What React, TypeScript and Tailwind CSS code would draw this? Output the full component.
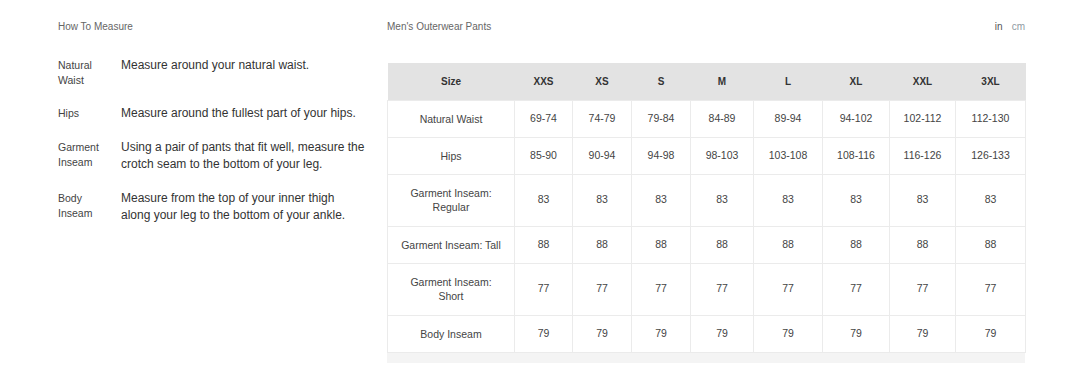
import React from 'react';

const sizes = ['XXS', 'XS', 'S', 'M', 'L', 'XL', 'XXL', '3XL'];
const colWidths = ['w-[127px]', 'w-[58px]', 'w-[59px]', 'w-[59px]', 'w-[63px]', 'w-[69px]', 'w-[67px]', 'w-[66px]', 'w-[70px]'];

const rows: { label: React.ReactNode; values: string[]; tall?: boolean }[] = [
  { label: 'Natural Waist', values: ['69-74', '74-79', '79-84', '84-89', '89-94', '94-102', '102-112', '112-130'] },
  { label: 'Hips', values: ['85-90', '90-94', '94-98', '98-103', '103-108', '108-116', '116-126', '126-133'] },
  { label: <>Garment Inseam:<br />Regular</>, values: Array(8).fill('83'), tall: true },
  { label: 'Garment Inseam: Tall', values: Array(8).fill('88') },
  { label: <>Garment Inseam:<br />Short</>, values: Array(8).fill('77'), tall: true },
  { label: 'Body Inseam', values: Array(8).fill('79') },
];

const guide = [
  { label: <>Natural<br />Waist</>, text: 'Measure around your natural waist.' },
  { label: 'Hips', text: 'Measure around the fullest part of your hips.' },
  { label: <>Garment<br />Inseam</>, text: <>Using a pair of pants that fit well, measure the<br />crotch seam to the bottom of your leg.</> },
  { label: <>Body<br />Inseam</>, text: <>Measure from the top of your inner thigh<br />along your leg to the bottom of your ankle.</> },
];

export default function App() {
  return (
    <div className="w-[1086px] h-[379px] bg-white font-['Liberation_Sans',Arial,sans-serif] flex pl-[58px] pt-[20px]">
      {/* How to measure */}
      <div className="w-[329px] shrink-0">
        <h3 className="text-[10px] leading-[14px] text-[#666]">How To Measure</h3>
        <div className="mt-[23px] flex flex-col gap-[17px]">
          {guide.map((g, i) => (
            <div key={i} className="flex items-start">
              <div className="w-[63px] shrink-0 text-[10.5px] leading-[15px] text-[#444] pt-[1px]">{g.label}</div>
              <div className="text-[12px] leading-[17px] text-[#333]">{g.text}</div>
            </div>
          ))}
        </div>
      </div>

      {/* Size chart */}
      <div className="w-[638px] shrink-0">
        <div className="flex justify-between items-center">
          <h3 className="text-[10px] leading-[14px] text-[#666]">Men's Outerwear Pants</h3>
          <div className="flex gap-[9px] text-[10px] leading-[14px]">
            <span className="text-[#555]">in</span>
            <span className="text-[#8f9aa2]">cm</span>
          </div>
        </div>
        <div className="mt-[29px] border-b-[10px] border-[#f4f4f4]">
          <table className="w-full border-collapse table-fixed text-center">
            <thead>
              <tr className="bg-[#e3e3e3] h-[37px]">
                <th className={`${colWidths[0]} text-[10px] font-bold text-[#333]`}>Size</th>
                {sizes.map((s, i) => (
                  <th key={s} className={`${colWidths[i + 1]} text-[10px] font-bold text-[#333]`}>{s}</th>
                ))}
              </tr>
            </thead>
            <tbody>
              {rows.map((r, ri) => (
                <tr key={ri} className={r.tall ? 'h-[52px]' : 'h-[37px]'}>
                  <td className="border border-[#ebebeb] text-[10.5px] leading-[14px] text-[#444]">{r.label}</td>
                  {r.values.map((v, vi) => (
                    <td key={vi} className="border border-[#ebebeb] text-[10.5px] text-[#444]">{v}</td>
                  ))}
                </tr>
              ))}
            </tbody>
          </table>
        </div>
      </div>
    </div>
  );
}
